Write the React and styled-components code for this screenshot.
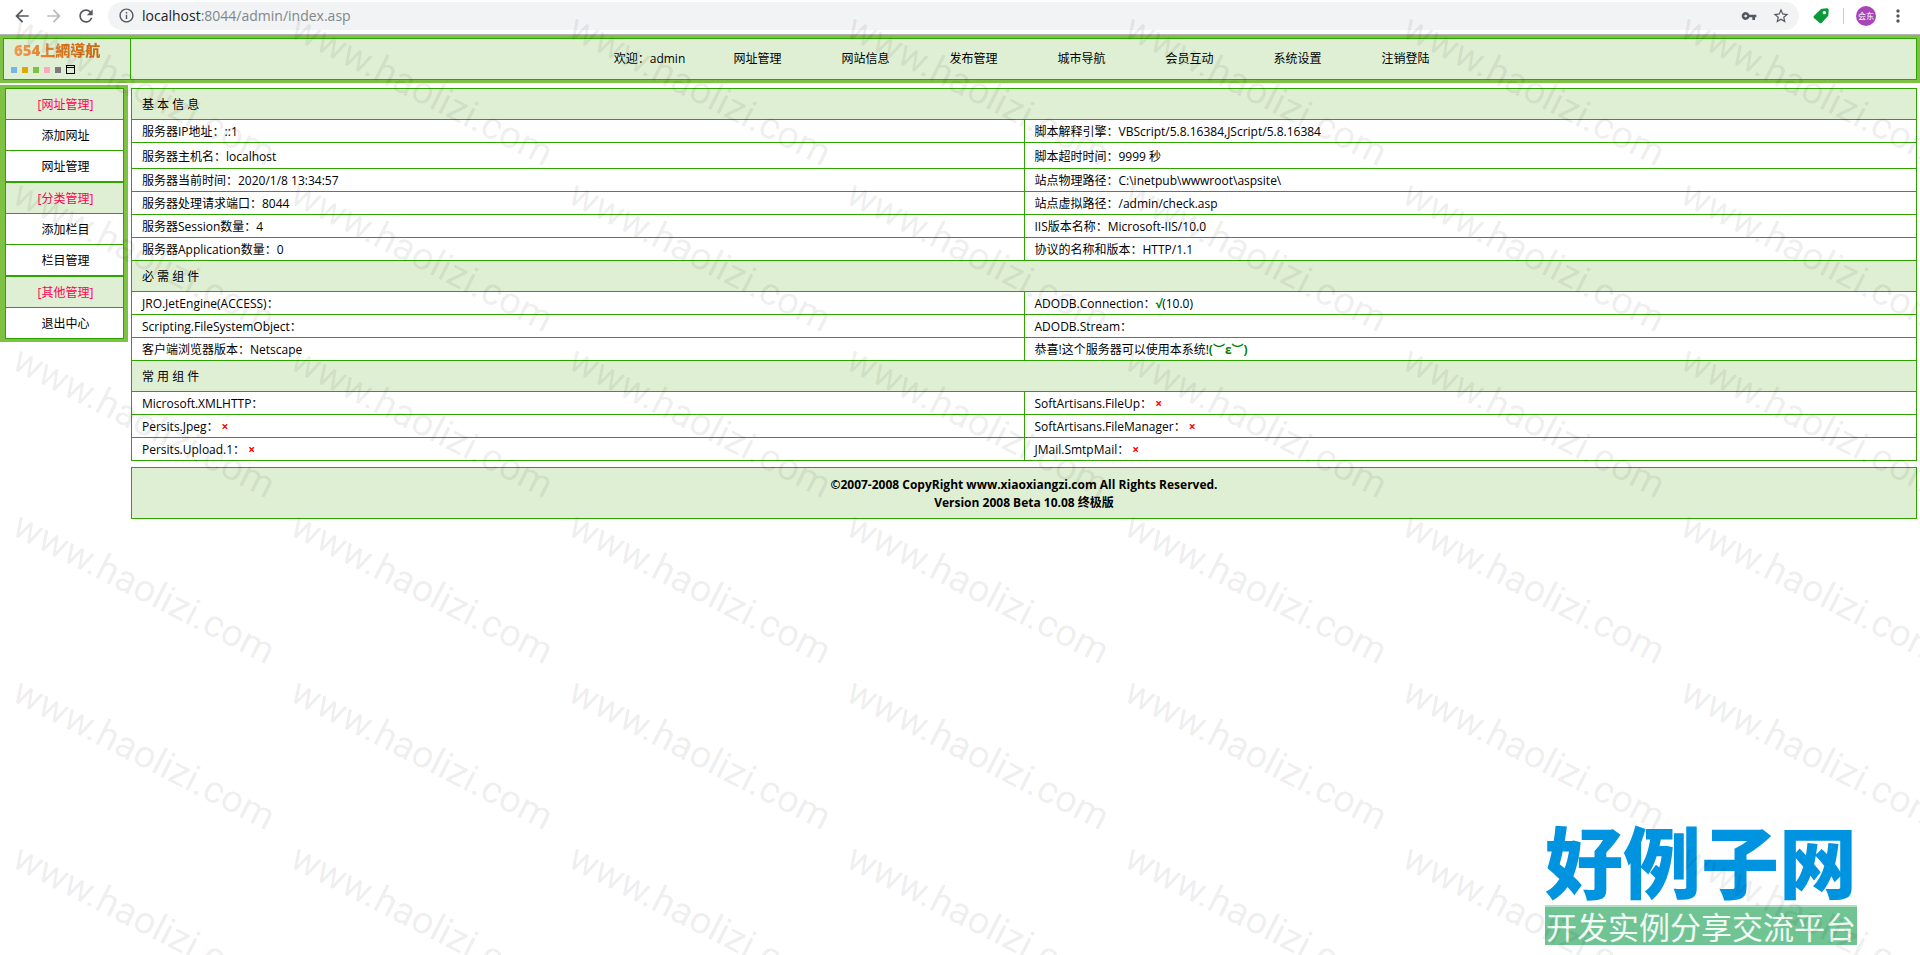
import styled, { createGlobalStyle } from "styled-components"
import { MdArrowBack, MdArrowForward, MdRefresh, MdInfoOutline, MdVpnKey, MdStarBorder, MdMoreVert } from "react-icons/md"

const navItems = ['网址管理','网站信息','发布管理','城市导航','会员互动','系统设置','注销登陆']

const skins = [
  { name:'blue', color:'#78b4e8' },
  { name:'yellow', color:'#dcaa00' },
  { name:'green', color:'#7dc243' },
  { name:'pink', color:'#ffa6c0' },
  { name:'gray', color:'#7a7a7a' },
]

const menus = [
  { title:'[网址管理]', links:['添加网址','网址管理'] },
  { title:'[分类管理]', links:['添加栏目','栏目管理'] },
  { title:'[其他管理]', links:['退出中心'] },
]

const sections = [
  {
    title:'基 本 信 息',
    rows:[
      [{ text:'服务器IP地址：::1' }, { text:'脚本解释引擎：VBScript/5.8.16384,JScript/5.8.16384' }],
      [{ text:'服务器主机名：localhost' }, { text:'脚本超时时间：9999 秒' }],
      [{ text:'服务器当前时间：2020/1/8 13:34:57' }, { text:'站点物理路径：C:\\inetpub\\wwwroot\\aspsite\\' }],
      [{ text:'服务器处理请求端口：8044' }, { text:'站点虚拟路径：/admin/check.asp' }],
      [{ text:'服务器Session数量：4' }, { text:'IIS版本名称：Microsoft-IIS/10.0' }],
      [{ text:'服务器Application数量：0' }, { text:'协议的名称和版本：HTTP/1.1' }],
    ],
  },
  {
    title:'必 需 组 件',
    rows:[
      [{ text:'JRO.JetEngine(ACCESS)：' }, { text:'ADODB.Connection：', ok:'√', after:'(10.0)' }],
      [{ text:'Scripting.FileSystemObject：' }, { text:'ADODB.Stream：' }],
      [{ text:'客户端浏览器版本：Netscape' }, { text:'恭喜!这个服务器可以使用本系统!', ok:'(︶ε︶)' }],
    ],
  },
  {
    title:'常 用 组 件',
    rows:[
      [{ text:'Microsoft.XMLHTTP：' }, { text:'SoftArtisans.FileUp：', missing:true }],
      [{ text:'Persits.Jpeg：', missing:true }, { text:'SoftArtisans.FileManager：', missing:true }],
      [{ text:'Persits.Upload.1：', missing:true }, { text:'JMail.SmtpMail：', missing:true }],
    ],
  },
]

const stamps = Array.from({ length: 42 }, (_, i) => i)

const BrowserBar = () => {
  return (
    <Browser>
      <IconButton aria-label='back'><MdArrowBack size={20} /></IconButton>
      <IconButton aria-label='forward' $faded><MdArrowForward size={20} /></IconButton>
      <IconButton aria-label='reload'><MdRefresh size={20} /></IconButton>
      <Address>
        <MdInfoOutline size={17} />
        <Url role='textbox' aria-label='address'>
          <b>localhost</b>:8044/admin/index.asp
        </Url>
        <IconButton aria-label='passwords'><MdVpnKey size={16} /></IconButton>
        <IconButton aria-label='bookmark'><MdStarBorder size={18} /></IconButton>
      </Address>
      <TagButton aria-label='extension'>
        <svg width='16' height='16' viewBox='0 0 16 16'>
          <path fill='#0b9a38' fillRule='evenodd' d='M9 .8 14 .2q1.600 0 1.700 1.600L15.400 7q0 .8-.8 1.500l-6 6.400q-.9.9-1.900 0L.9 10Q0 9 .8 8.100L7.300 1.700Q8 .9 9 .8zM11.300 2.900a1.700 1.700 0 1 0 .1 0z' />
        </svg>
      </TagButton>
      <Divider />
      <Avatar aria-label='profile'>会东</Avatar>
      <IconButton aria-label='menu'><MdMoreVert size={20} /></IconButton>
    </Browser>
  )
}

const Cell = ({ item }) => {
  return (
    <td>
      {item.text}
      {item.ok && <Good>{item.ok}</Good>}
      {item.after}
      {item.missing && <Bad>×</Bad>}
    </td>
  )
}

const App = () => {
  return (
    <Page>
      <GlobalStyle />
      <BrowserBar />

      <Header>
        <HeaderInner>
          <Brand>
            <BrandName>654上網導航</BrandName>
            <Skins>
              {skins.map((skin) => (
                <Skin key={skin.name} aria-label={skin.name} $color={skin.color} />
              ))}
              <FrameButton aria-label='window' />
            </Skins>
          </Brand>
          <Nav>
            <span>欢迎：admin</span>
            {navItems.map((item) => <a href='#' key={item}>{item}</a>)}
          </Nav>
        </HeaderInner>
      </Header>

      <Body>
        <Sidebar>
          {menus.map((menu) => (
            <Menu key={menu.title}>
              <MenuTitle>{menu.title}</MenuTitle>
              {menu.links.map((link) => <MenuLink href='#' key={link}>{link}</MenuLink>)}
            </Menu>
          ))}
        </Sidebar>

        <Main>
          <InfoTable>
            {sections.map((section) => (
              <tbody key={section.title}>
                <tr><th colSpan={2}>{section.title}</th></tr>
                {section.rows.map(([left, right]) => (
                  <InfoRow key={left.text} $tall={left.text.includes('主机名')}>
                    <Cell item={left} />
                    <Cell item={right} />
                  </InfoRow>
                ))}
              </tbody>
            ))}
          </InfoTable>
          <Footer>
            <div>©2007-2008 CopyRight www.xiaoxiangzi.com All Rights Reserved.</div>
            <div>Version 2008 Beta 10.08 终极版</div>
          </Footer>
        </Main>
      </Body>

      <SiteLogo>
        <LogoName>好例子网</LogoName>
        <LogoSlogan>开发实例分享交流平台</LogoSlogan>
      </SiteLogo>

      {/* repeated stamp over the whole page */}
      <Watermark aria-hidden='true'>
        {stamps.map((n) => <Stamp key={n}>www.haolizi.com</Stamp>)}
      </Watermark>
    </Page>
  )
}

const line = '#2ea400'
const green = '#7dc242'
const pale = '#dfefd3'

const GlobalStyle = createGlobalStyle`
*{
  box-sizing: border-box;
}
body{
  margin: 0;
  background: #fff;
  color: #000;
  font: 12px/18px "Open Sans", "Noto Sans CJK SC", sans-serif;
}
a{
  color: inherit;
  text-decoration: none;
}
button{
  padding: 0;
  border: 0;
  background: none;
  font: inherit;
  cursor: pointer;
}
`

const Page = styled.div`
  position: relative;
  min-height: 100vh;
  overflow: hidden;
`

const Browser = styled.div`
  display: flex;
  align-items: center;
  height: 35px;
  padding: 0 6px 3px;
  border-bottom: 1px solid #b4b4b8;
`

const IconButton = styled.button`
  display: flex;
  align-items: center;
  justify-content: center;
  width: 32px;
  height: 28px;
  color: ${(props) => (props.$faded ? '#b9bbbe' : '#55585d')};
`

const Address = styled.div`
  flex: 1;
  display: flex;
  align-items: center;
  height: 28px;
  margin-left: 6px;
  padding: 0 2px 0 10px;
  border-radius: 14px;
  background: #f1f3f4;
  color: #55585d;
`

const Url = styled.div`
  flex: 1;
  margin-left: 7px;
  color: #80868b;
  font-size: 14px;
  b{
    font-weight: normal;
    color: #202124;
  }
`

const TagButton = styled(IconButton)`
  margin-left: 6px;
`

const Divider = styled.div`
  width: 1px;
  height: 16px;
  margin: 0 12px 0 6px;
  background: #c8cace;
`

const Avatar = styled.button`
  width: 20px;
  height: 20px;
  margin-right: 6px;
  border-radius: 50%;
  background: #a846b9;
  color: #fff;
  font-size: 8px;
  line-height: 20px;
`

const Header = styled.header`
  padding: 3px;
  background: ${green};
`

const HeaderInner = styled.div`
  display: flex;
  height: 42px;
  border: 1px solid ${line};
  background: ${pale};
`

const Brand = styled.div`
  width: 127px;
  padding: 2px 7px;
  border-right: 1px solid ${line};
`

const BrandName = styled.div`
  width: max-content;
  margin-left: 3px;
  font-size: 15px;
  font-weight: 900;
  background: linear-gradient(to right, #ee9a50, #d9731c 60%, #c96a10);
  background-clip: text;
  color: transparent;
`

const Skins = styled.div`
  display: flex;
  align-items: center;
  gap: 5px;
  height: 13px;
  margin-top: 4px;
`

const Skin = styled.button`
  width: 6px;
  height: 6px;
  background: ${(props) => props.$color};
`

const FrameButton = styled.button`
  width: 9px;
  height: 9px;
  border: 1px solid #000;
  border-top-width: 3px;
  border-top-style: double;
`

const Nav = styled.nav`
  flex: 1;
  display: grid;
  grid-template-columns: repeat(8, 108px);
  justify-content: center;
  align-items: center;
  padding-left: 8px;
  text-align: center;
`

const Body = styled.div`
  display: flex;
  align-items: flex-start;
  gap: 3px;
  padding: 2px 3px 0 0;
`

const Sidebar = styled.aside`
  flex: none;
  width: 128px;
  padding: 3px 4px 3px 5px;
  background: ${green};
  text-align: center;
`

const Menu = styled.div`
  border: 1px solid ${line};
  background: #fff;
`

const MenuTitle = styled.div`
  padding: 7px 0 5px 2px;
  background: ${pale};
  color: #ff0055;
`

const MenuLink = styled.a`
  display: block;
  padding: 7px 0 5px 2px;
  border-top: 1px solid ${line};
`

const Main = styled.main`
  flex: 1;
  padding-top: 3px;
`

const InfoTable = styled.table`
  width: 100%;
  border-collapse: collapse;
  table-layout: fixed;
  th, td{
    padding: 2px 10px 0;
    border: 1px solid ${line};
    text-align: left;
    font-weight: normal;
  }
  th{
    height: 31px;
    background: ${pale};
  }
`

const InfoRow = styled.tr`
  height: ${(props) => (props.$tall ? '26px' : '23px')};
`

const Good = styled.span`
  color: #008000;
  font-family: "Open Sans", "DejaVu Sans", "Noto Sans CJK SC", sans-serif;
  font-weight: bold;
`

const Bad = styled.span`
  margin-left: 3px;
  color: #ff0000;
  font-weight: bold;
`

const Footer = styled.footer`
  margin-top: 6px;
  padding: 8px 8px 6px;
  border: 1px solid ${line};
  background: ${pale};
  text-align: center;
  font-weight: bold;
`

const SiteLogo = styled.div`
  position: absolute;
  right: 63px;
  bottom: 10px;
  text-align: center;
  font-family: "Noto Sans CJK SC", sans-serif;
`

const LogoName = styled.div`
  color: #0093e0;
  font-size: 78px;
  font-weight: 900;
  line-height: 92px;
`

const LogoSlogan = styled.div`
  border-top: 2px solid #b0dfc4;
  background: #70c493;
  color: #f2fbf5;
  font-size: 31px;
  line-height: 38px;
`

const Watermark = styled.div`
  position: absolute;
  inset: 0;
  display: grid;
  grid-template-columns: repeat(7, 278px);
  grid-auto-rows: 166px;
  padding: 4px 10px;
  overflow: hidden;
  pointer-events: none;
`

const Stamp = styled.span`
  width: max-content;
  height: 38px;
  color: rgba(0, 0, 0, 0.08);
  font: 38px/38px Roboto, "Liberation Sans", sans-serif;
  transform: rotate(27deg);
  transform-origin: 0 32px;
`

export default App
